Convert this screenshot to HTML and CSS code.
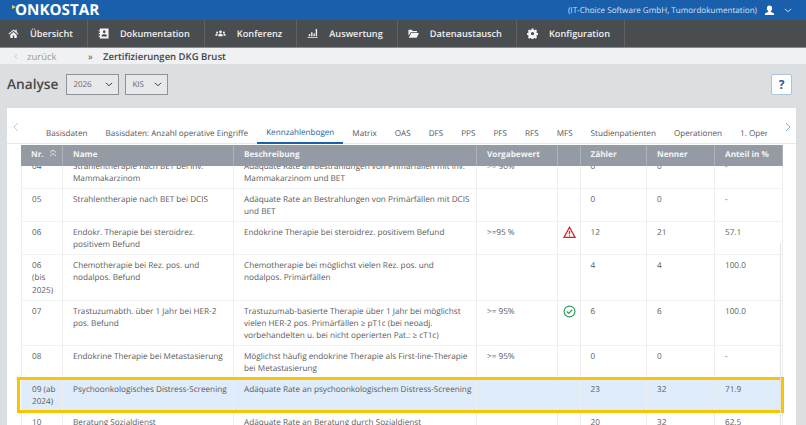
FILE: index.html
```html
<!DOCTYPE html>
<html lang="de">
<head>
<meta charset="utf-8">
<title>Analyse</title>
<link rel="stylesheet" href="styles.css">
</head>
<body>
<header class="topbar">
  <div class="logo"><span class="logo-mark"></span>ONKOSTAR</div>
  <div class="user">
    <span>(IT-Choice Software GmbH, Tumordokumentation)</span>
    <svg class="user-icon" viewBox="0 0 12 12"><path d="M6 0.5c1.8 0 2.8 1.2 2.8 3 0 1.4-.7 2.6-1.4 3.1v.9c1 .4 3.6 1 3.6 2.3v1.2H1V9.800c0-1.300 2.600-1.900 3.600-2.300v-.9C3.900 6.100 3.200 4.900 3.200 3.500c0-1.800 1-3 2.800-3z"/></svg>
    <svg class="user-caret" viewBox="0 0 10 6"><path d="M1 1l4 3.500L9 1"/></svg>
  </div>
</header>
<nav class="nav">
  <a class="nav-item nav-first"><svg viewBox="0 0 12 12"><path d="M6 1.500L.5 6.300l.7.8L6 3l4.800 4.100.7-.8-2-1.700V2H8v1.400zM2.500 7.500V11h2.700V8.200h1.600V11h2.700V7.500L6 4.400z"/></svg>Übersicht</a>
  <a class="nav-item"><svg viewBox="0 0 12 12"><path fill-rule="evenodd" d="M2 .5h9.500v11H2V9.500H.8v-1H2V6.500H.8v-1H2V3.500H.8v-1H2zM6.800 2.500a1.400 1.400 0 0 0-1.400 1.700c0 .9.500 1.600 1.400 1.600s1.400-.7 1.400-1.600a1.400 1.400 0 0 0-1.400-1.700zM4 9.200h5.600V7.800c-.5-.6-1.300-.9-2.800-.9S4.500 7.200 4 7.800z"/></svg>Dokumentation</a>
  <a class="nav-item"><svg viewBox="0 0 12 12"><circle cx="6" cy="4.200" r="1.500"/><circle cx="2.300" cy="4.800" r="1.100"/><circle cx="9.700" cy="4.800" r="1.100"/><path d="M3.500 9c0-2 1-3 2.500-3s2.500 1 2.500 3zM.3 8.500c0-1.500.7-2.500 2-2.500l.6.200C2.700 7 2.600 7.700 2.600 8.500zM11.700 8.500c0-1.500-.7-2.500-2-2.500l-.6.200c.2.800.3 1.500.3 2.300z"/></svg>Konferenz</a>
  <a class="nav-item"><svg viewBox="0 0 12 12"><path d="M.5 10h11v1H.5zM2 6.500h1.500V9H2zM4.500 4.500H6V9H4.500zM7 6h1.500v3H7zM9.500 1H11v8H9.500z"/></svg>Auswertung</a>
  <a class="nav-item"><svg viewBox="0 0 12 12"><path d="M.5 2h3.600l1 1.200h4.700v1.500H3L.5 8.500zM3.500 5.500H12L9.500 10.500H.8z"/></svg>Datenaustausch</a>
  <a class="nav-item"><svg viewBox="0 0 12 12"><path fill-rule="evenodd" d="M5 .5h2l.3 1.500 1 .4 1.300-.8 1.400 1.400-.8 1.300.4 1 1.400.3v2l-1.400.3-.4 1 .8 1.300-1.400 1.400-1.300-.8-1 .4-.3 1.400H5l-.3-1.400-1-.4-1.300.8L1 10.200l.8-1.300-.4-1L0 7.600v-2l1.400-.3.400-1L1 3l1.400-1.400 1.300.8 1-.4zM6 4.300a1.800 1.800 0 1 0 0 3.600 1.800 1.800 0 0 0 0-3.600z"/></svg>Konfiguration</a>
</nav>
<div class="crumbs">
  <span class="back"><svg viewBox="0 0 6 10"><path d="M4.500 1.500L1.500 5l3 3.500"/></svg>zurück</span>
  <span class="crumb-sep">»</span>
  <span class="crumb-title">Zertifizierungen DKG Brust</span>
</div>
<main class="content">
  <div class="title-row">
    <h1>Analyse</h1>
    <div class="select select-year">2026<svg viewBox="0 0 10 6"><path d="M1 1l4 3.500L9 1"/></svg></div>
    <div class="select select-kis">KIS<svg viewBox="0 0 10 6"><path d="M1 1l4 3.500L9 1"/></svg></div>
    <button class="help">?</button>
  </div>
  <section class="panel">
    <div class="tabbar">
      <svg class="tab-arrow" viewBox="0 0 6 10"><path d="M5 1L1 5l4 4"/></svg>
      <div class="tabs">
        <a>Basisdaten</a>
        <a>Basisdaten: Anzahl operative Eingriffe</a>
        <a class="active">Kennzahlenbogen</a>
        <a>Matrix</a>
        <a>OAS</a>
        <a>DFS</a>
        <a>PPS</a>
        <a>PFS</a>
        <a>RFS</a>
        <a>MFS</a>
        <a>Studienpatienten</a>
        <a>Operationen</a>
        <a>1. Operation</a>
      </div>
      <svg class="tab-arrow tab-arrow-r" viewBox="0 0 6 10"><path d="M1 1l4 4-4 4"/></svg>
    </div>
    <div class="grid">
      <div class="row head">
        <div>Nr. <svg class="sort" viewBox="0 0 8 8"><path d="M1 3.500L4 1l3 2.500M1 7L4 4.500 7 7"/></svg></div>
        <div>Name</div><div>Beschreibung</div><div>Vorgabewert</div><div></div><div>Zähler</div><div>Nenner</div><div>Anteil in %</div>
      </div>
      <div class="rows">
        <div class="row h33">
          <div>04</div><div>Strahlentherapie nach BET bei inv. Mammakarzinom</div><div>Adäquate Rate an Bestrahlungen von Primärfällen mit inv. Mammakarzinom und BET</div><div>&gt;= 90%</div><div></div><div>0</div><div>0</div><div>-</div>
        </div>
        <div class="row h33">
          <div>05</div><div>Strahlentherapie nach BET bei DCIS</div><div>Adäquate Rate an Bestrahlungen von Primärfällen mit DCIS und BET</div><div></div><div></div><div>0</div><div>0</div><div>-</div>
        </div>
        <div class="row h33">
          <div>06</div><div>Endokr. Therapie bei steroidrez. positivem Befund</div><div>Endokrine Therapie bei steroidrez. positivem Befund</div><div>&gt;=95 %</div>
          <div class="flag"><svg viewBox="0 0 12 12"><path class="warn" d="M6 1.200L.9 10.500h10.200zM6 4.500v3.200M6 8.500v1"/></svg></div>
          <div>12</div><div>21</div><div>57.1</div>
        </div>
        <div class="row h45">
          <div>06 (bis 2025)</div><div>Chemotherapie bei Rez. pos. und nodalpos. Befund</div><div>Chemotherapie bei möglichst vielen Rez. pos. und nodalpos. Primärfällen</div><div></div><div></div><div>4</div><div>4</div><div>100.0</div>
        </div>
        <div class="row h45">
          <div>07</div><div>Trastuzumabth. über 1 Jahr bei HER-2 pos. Befund</div><div>Trastuzumab-basierte Therapie über 1 Jahr bei möglichst vielen HER-2 pos. Primärfällen ≥ pT1c (bei neoadj. vorbehandelten u. bei nicht operierten Pat.: ≥ cT1c)</div><div>&gt;= 95%</div>
          <div class="flag"><svg viewBox="0 0 12 12"><circle class="ok" cx="6" cy="6" r="5"/><path class="ok" d="M3.500 6l1.800 1.800 3.200-3.400"/></svg></div>
          <div>6</div><div>6</div><div>100.0</div>
        </div>
        <div class="row h33">
          <div>08</div><div>Endokrine Therapie bei Metastasierung</div><div>Möglichst häufig endokrine Therapie als First-line-Therapie bei Metastasierung</div><div>&gt;= 95%</div><div></div><div>0</div><div>0</div><div>-</div>
        </div>
        <div class="row h33 selected">
          <div>09 (ab 2024)</div><div>Psychoonkologisches Distress-Screening</div><div>Adäquate Rate an psychoonkologischem Distress-Screening</div><div></div><div></div><div>23</div><div>32</div><div>71.9</div>
        </div>
        <div class="row h33">
          <div>10</div><div>Beratung Sozialdienst</div><div>Adäquate Rate an Beratung durch Sozialdienst</div><div></div><div></div><div>20</div><div>32</div><div>62.5</div>
        </div>
      </div>
      <span class="scroll-thumb"></span>
    </div>
  </section>
</main>
</body>
</html>
```
FILE: styles.css
```css
* { box-sizing: border-box; }
html, body { margin: 0; height: 425px; overflow: hidden; }
body { font-family: "Open Sans", "Liberation Sans", sans-serif; background: #dcdfe2; color: #5a5a5a; font-size: 8.200px; text-rendering: geometricPrecision; }

.topbar { height: 20px; background: #1a5fab; display: flex; align-items: center; justify-content: space-between; padding: 0 14px 0 12px; color: #fff; }
.logo { position: relative; font-size: 15.200px; font-weight: 700; line-height: 20px; padding-left: 3px; }
.logo-mark { position: absolute; left: 0; top: 5px; width: 0; height: 0; border-left: 4px solid #f5d33c; border-top: 2px solid transparent; border-bottom: 2px solid transparent; }
.user { display: flex; align-items: center; font-size: 8.100px; color: #d5e2f2; }
.user-icon { width: 11px; height: 11px; margin-left: 7px; fill: #fff; }
.user-caret { width: 8px; height: 5px; margin-left: 9px; fill: none; stroke: #d5e2f2; stroke-width: 1.200; }

.nav { height: 28px; background: #4a4d50; border-bottom: 1px solid #8b8d8f; display: flex; color: #f0f0f0; font-size: 9.200px; font-weight: 600; }
.nav-item { display: flex; align-items: center; gap: 11px; padding: 0 14px 0 10px; border-right: 1px solid #5f6265; }
.nav-item svg { width: 11px; height: 11px; fill: #f4f4f4; flex: none; }
.nav-first { padding-left: 8px; }

.crumbs { height: 16px; background: #f0f1f2; display: flex; align-items: center; font-size: 9.500px; padding-left: 14px; }
.back { display: flex; align-items: center; gap: 9px; color: #9a9a9a; width: 74px; }
.back svg { width: 4px; height: 7px; fill: none; stroke: #b5b5b5; stroke-width: 1; }
.crumb-sep { width: 15px; color: #555; }
.crumb-title { color: #444; font-weight: 600; }

.content { padding: 10px 10px 0 7px; }
.title-row { display: flex; align-items: center; height: 21px; }
.title-row h1 { margin: 0 8px 0 0; font-size: 13.700px; font-weight: 600; color: #4a4a4a; line-height: 21px; }
.select { height: 21px; display: flex; align-items: center; justify-content: space-between; border: 1px solid #8e9296; background: #e6e8ea; font-size: 8px; color: #666; padding: 0 5px 0 6px; }
.select svg { width: 8px; height: 5px; fill: none; stroke: #444; stroke-width: 1.200; }
.select-year { width: 53px; margin-right: 6px; }
.select-kis { width: 43px; }
.help { margin-left: auto; margin-right: 4px; width: 21px; height: 21px; padding: 0; background: #fff; border: 1px solid #a9c4de; border-radius: 2px; color: #1f5c9e; font: 700 12px "Open Sans", sans-serif; }

.panel { margin-top: 13px; height: 320px; background: #fff; padding: 0 13px 0 14px; }
.tabbar { position: relative; height: 36px; margin: 0 -13px 0 -14px; border-bottom: 1px solid #e8eaec; display: flex; padding: 0 10px 0 30px; }
.tab-arrow { position: absolute; left: 6px; top: 14px; width: 6px; height: 10px; fill: none; stroke: #b6cde4; stroke-width: 1; }
.tab-arrow-r { left: auto; right: 5px; stroke: #7fa9d3; }
.tabs { display: flex; width: 730px; height: 36px; overflow: hidden; align-items: flex-end; color: #555; font-size: 8.150px; white-space: nowrap; }
.tabs a { padding: 0 9px; height: 17px; line-height: 14px; flex: none; }
.tabs a.active { color: #1a5fab; border-bottom: 2px solid #1a5fab; height: 19px; line-height: 15px; }

.grid { position: relative; height: 284px; }
.rows { margin-top: -10px; }
.row { display: grid; grid-template-columns: 42px 171px 243px 81px 22.500px 66.500px 68px 68px; border-bottom: 1px solid #f0f1f2; line-height: 12.400px; }
.row > div { padding: 5px 4px 0 10px; border-right: 1px solid #eceded; }
.row > div:nth-child(2) { padding-right: 2px; }
.row > div:first-child { padding-right: 6px; border-left: 1px solid #eceded; }
.h33 { height: 33px; }
.h45 { height: 45.500px; }
.head { position: relative; z-index: 1; height: 21px; margin-top: 1px; background: #949ba5; color: #f4f5f6; font-weight: 700; border-bottom: 0; }
.head > div { padding-top: 4px; border-right: 1px solid #aeb3ba; }
.head > div:first-child { border-left: 0; padding-right: 0; white-space: nowrap; }
.sort { width: 8px; height: 8px; margin-left: 3px; fill: none; stroke: #eee; stroke-width: .9; }
.flag { padding: 4px 0 0 5px !important; }
.flag svg { width: 13px; height: 13px; display: block; }
.warn { fill: none; stroke: #d8232a; stroke-width: 1.200; }
.ok { fill: none; stroke: #2f9e5b; stroke-width: 1.100; }
.selected { position: relative; background: #dfecfb; }
.selected::after { content: ""; position: absolute; left: -4px; right: -1px; top: -2px; bottom: -2px; border: 3px solid #fac400; pointer-events: none; }
.scroll-thumb { position: absolute; right: 2px; top: 98px; width: 1px; height: 190px; background: #e3e4e6; }
```
